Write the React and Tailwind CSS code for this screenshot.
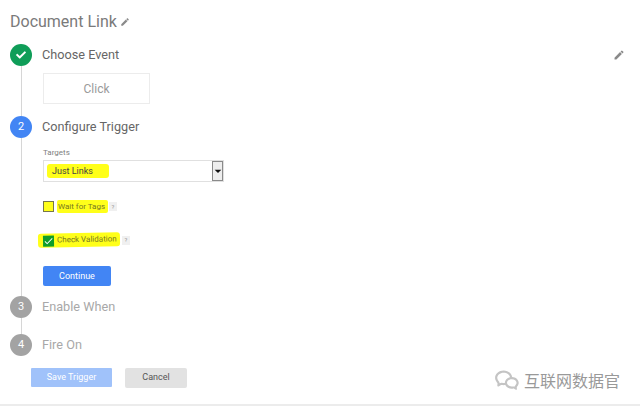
import React from "react";
import { MdEdit, MdCheck, MdArrowDropDown } from "react-icons/md";
import { FaCheck } from "react-icons/fa";
import { RiWechatLine } from "react-icons/ri";

const font = { fontFamily: "Roboto, sans-serif" };

const Step = ({ badge, color, title, titleColor, line, h, children }) => (
  <div className={`flex ${h}`}>
    <div className="flex flex-col items-center w-[22px] shrink-0">
      <div className={`w-[22px] h-[22px] rounded-full shrink-0 flex items-center justify-center text-white text-[11px] ${color}`}>
        {badge}
      </div>
      {line && <div className="w-px flex-1 bg-[#d6d6d6]" />}
    </div>
    <div className="ml-[10px] flex-1 min-w-0">
      <div className={`h-[22px] flex items-center text-[12.7px] ${titleColor}`}>{title}</div>
      {children}
    </div>
  </div>
);

export default function App() {
  return (
    <div className="w-[640px] h-[406px] bg-white overflow-hidden flex flex-col border-b-2 border-[#ececec]" style={font}>
      <div className="flex items-start gap-[3px] pl-[10px] pt-[12px] h-[44px] shrink-0">
        <span className="text-[16px] leading-[20px] text-[#7a7a7a]">Document Link</span>
        <MdEdit className="text-[#8a8a8a] text-[10px] mt-[5px]" />
      </div>

      <div className="pl-[10px] flex flex-col">
        <Step
          badge={<FaCheck className="text-[10px]" />}
          color="bg-[#0f9d58]"
          title={
            <span className="flex w-full items-center justify-between pr-[15px]">
              Choose Event
              <MdEdit className="text-[#8a8a8a] text-[12px]" />
            </span>
          }
          titleColor="text-[#666666]"
          line
          h="h-[72px]"
        >
          <div className="mt-[7px] ml-px w-[107px] h-[31px] border border-[#ececec] flex items-center justify-center text-[12px] text-[#9a9a9a]">
            Click
          </div>
        </Step>

        <Step badge="2" color="bg-[#4285f4]" title="Configure Trigger" titleColor="text-[#666666]" line h="h-[180px]">
          <div className="ml-px mt-[9px] text-[8px] leading-[10px] text-[#808080]">
            <div className="pt-[1px] h-[11px]">Targets</div>
            <div className="mt-[2px] w-[181px] h-[22px] border border-[#e0e0e0] flex items-center justify-between">
              <span className="ml-[3px] px-[5px] py-[2px] bg-[#ffff1a] text-[9px] leading-[10px] w-[62px] rounded-[3px] text-[#444]">Just Links</span>
              <span className="w-[11px] h-[20px] bg-[#eeeeee] border border-[#8a8a8a] flex items-center justify-center">
                <MdArrowDropDown className="text-[#111] text-[16px] shrink-0" />
              </span>
            </div>

            <div className="mt-[18px] flex items-center h-[13px]">
              <span className="w-[11px] h-[11px] bg-[#ffff1a] border border-[#77774a] shrink-0" />
              <span className="ml-[3px] px-[1px] bg-[#ffff1a] text-[8px] leading-[13px] text-[#777722] rounded-[2px] w-[51px]">Wait for Tags</span>
              <span className="ml-[1px] w-[8px] h-[9px] bg-[#f0f0f0] text-[6px] text-[#999] flex items-center justify-center">?</span>
            </div>

            <div className="mt-[20px] flex items-center h-[14px] -ml-[5px]">
              <span className="pl-[5px] pr-[2px] bg-[#ffff1a] rounded-[3px] flex items-center h-[14px] w-[82px] -rotate-1">
                <span className="w-[11px] h-[11px] bg-[#0f9d2a] flex items-center justify-center text-white shrink-0">
                  <MdCheck className="text-[11px]" />
                </span>
                <span className="ml-[3px] text-[8px] leading-[12px] text-[#777722] whitespace-nowrap">Check Validation</span>
              </span>
              <span className="ml-[2px] w-[8px] h-[9px] bg-[#f0f0f0] text-[6px] text-[#999] flex items-center justify-center">?</span>
            </div>

            <button className="mt-[19px] w-[68px] h-[20px] rounded-[2px] bg-[#4285f4] text-white text-[9px] flex items-center justify-center">
              Continue
            </button>
          </div>
        </Step>

        <Step badge="3" color="bg-[#a3a3a3]" title="Enable When" titleColor="text-[#a8a8a8]" line h="h-[38px]" />
        <Step badge="4" color="bg-[#a3a3a3]" title="Fire On" titleColor="text-[#a8a8a8]" h="h-[25px]" />
      </div>

      <div className="flex items-start justify-between pl-[31px] pr-[20px] mt-[9px]">
        <div className="flex items-start gap-[13px]">
          <button className="w-[81px] h-[19px] rounded-[1px] bg-[#a0c2fa] text-white text-[9px] flex items-center justify-center">
            Save Trigger
          </button>
          <button className="w-[62px] h-[20px] rounded-[2px] bg-[#e2e2e2] text-[#555] text-[9px] flex items-center justify-center">
            Cancel
          </button>
        </div>
        <div className="flex items-center gap-[4px] text-[#999999] -mt-[1px]">
          <RiWechatLine className="text-[26px] text-[#c4c4c4]" />
          <span className="text-[16px] leading-[22px] font-['Noto_Sans_CJK_SC',sans-serif]">互联网数据官</span>
        </div>
      </div>
    </div>
  );
}
